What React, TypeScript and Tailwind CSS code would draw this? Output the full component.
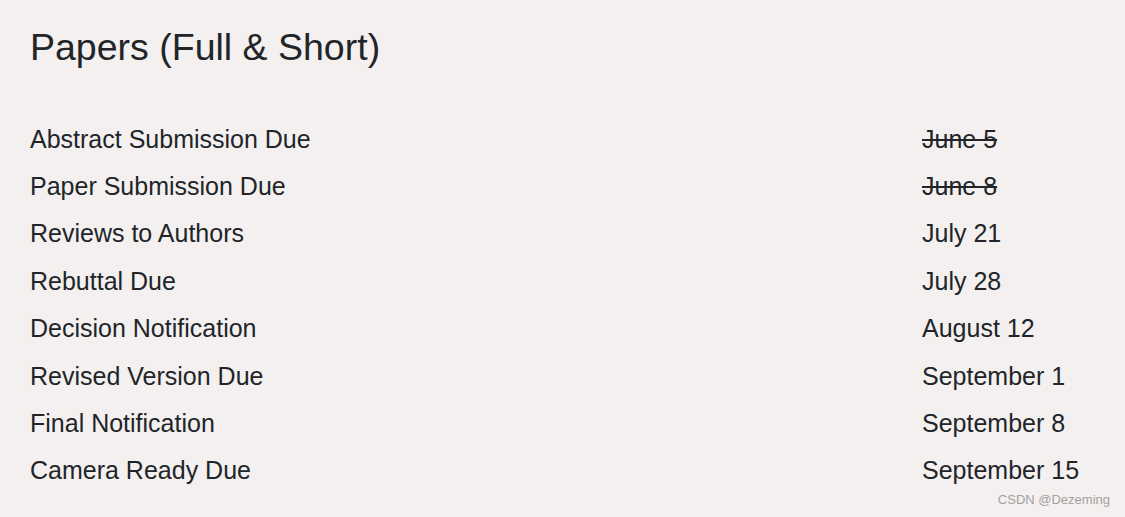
const rows: { label: string; date: string; struck?: boolean }[] = [
  { label: "Abstract Submission Due", date: "June 5", struck: true },
  { label: "Paper Submission Due", date: "June 8", struck: true },
  { label: "Reviews to Authors", date: "July 21" },
  { label: "Rebuttal Due", date: "July 28" },
  { label: "Decision Notification", date: "August 12" },
  { label: "Revised Version Due", date: "September 1" },
  { label: "Final Notification", date: "September 8" },
  { label: "Camera Ready Due", date: "September 15" },
]

export default function App() {
  return (
    <div className="relative w-[1125px] h-[517px] overflow-hidden bg-[#f4f0f0] text-[#212529] font-['Liberation_Sans',Arial,sans-serif]">
      <div className="px-[30px]">
        <h1 className="mt-[25px] text-[37.5px] leading-[44px] font-normal">Papers (Full &amp; Short)</h1>

        <div className="mt-[46px]">
          {rows.map((r) => (
            <div key={r.label} className="grid grid-cols-[892px_1fr] h-[47.4px] items-center text-[25px] leading-[36px]">
              <span>{r.label}</span>
              <span className={r.struck ? "line-through" : ""}>{r.date}</span>
            </div>
          ))}
        </div>
      </div>

      {/* watermark */}
      <span className="absolute right-[15px] bottom-[8px] text-[13px] text-[#a3a0a0]">CSDN @Dezeming</span>
    </div>
  )
}
